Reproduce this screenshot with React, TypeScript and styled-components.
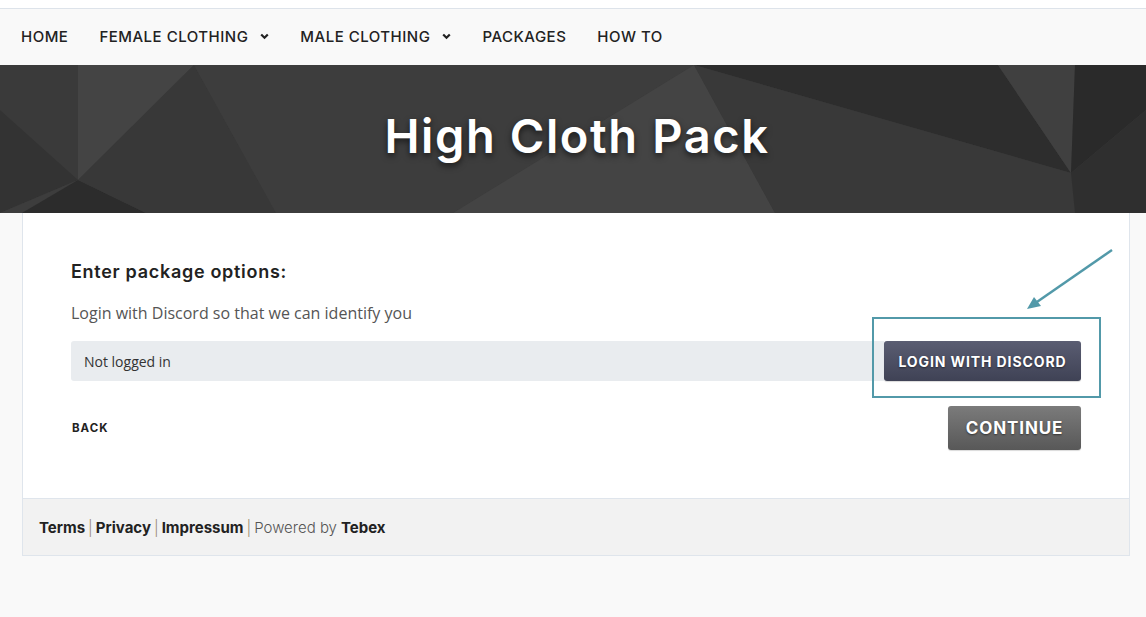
import React from 'react';
import styled, { createGlobalStyle } from 'styled-components';

const GlobalStyle = createGlobalStyle`
  body {
    margin: 0;
    background: #f9f9f9;
    font-family: "Open Sans", "Noto Sans", sans-serif;
  }
`;

const HEAD = `Inter, "Noto Sans", sans-serif`;

const TopStrip = styled.div`
  height: 8px;
  background: #fff;
  border-bottom: 1px solid #dde3ea;
`;

const Nav = styled.nav`
  height: 56px;
  display: flex;
  align-items: center;
  gap: 31px;
  padding-left: 21px;
  background: #f9f9f9;
`;

const NavItem = styled.a`
  display: flex;
  align-items: center;
  gap: 12px;
  font-family: ${HEAD};
  font-weight: 500;
  font-size: 15px;
  letter-spacing: 0.5px;
  color: #222;
  text-decoration: none;
  margin-top: -2px;
`;

const Hero = styled.header`
  position: relative;
  height: 148px;
  background: #3b3b3b;
  display: flex;
  align-items: center;
  justify-content: center;
  overflow: hidden;
`;

const HeroArt = styled.svg`
  position: absolute;
  inset: 0;
  width: 100%;
  height: 100%;
`;

const Title = styled.h1`
  position: relative;
  margin: 0 0 8px 8px;
  font-family: ${HEAD};
  font-weight: 600;
  font-size: 47px;
  letter-spacing: 1.6px;
  color: #fff;
  text-shadow: 0 3px 6px rgba(0, 0, 0, 0.6);
`;

const Main = styled.main`
  margin: 0 16px 0 22px;
`;

const Card = styled.section`
  background: #fff;
  border: 1px solid #dfe5ec;
  border-top: none;
`;

const CardBody = styled.div`
  padding: 48px;
`;

const Heading = styled.h3`
  margin: 0;
  font-family: ${HEAD};
  font-weight: 600;
  font-size: 18px;
  letter-spacing: 0.7px;
  color: #222;
  line-height: 22px;
`;

const Help = styled.p`
  margin: 18px 0 0;
  font-size: 16px;
  line-height: 24px;
  color: #555;
`;

const InputRow = styled.div`
  display: flex;
  margin-top: 16px;
  height: 40px;
`;

const Field = styled.div`
  flex: 1;
  display: flex;
  align-items: center;
  padding-left: 13px;
  background: #e9ecef;
  border-radius: 3px 0 0 3px;
  font-size: 14px;
  color: #333;
`;

const ButtonWrap = styled.div`
  position: relative;
  display: flex;
`;

const Button = styled.button<{ tone: 'discord' | 'grey' }>`
  border: none;
  border-radius: 3px;
  color: #fff;
  font-family: ${HEAD};
  font-weight: 700;
  text-transform: uppercase;
  text-shadow: 0 1px 2px rgba(0, 0, 0, 0.5);
  cursor: pointer;
  padding: 0;
  background: ${(p) =>
    p.tone === 'discord'
      ? 'linear-gradient(#5a5d72, #3f4255)'
      : 'linear-gradient(#7b7b7b, #585858)'};
  box-shadow: 0 1px 1px rgba(0, 0, 0, 0.15);
`;

const DiscordButton = styled(Button)`
  width: 197px;
  font-size: 14px;
  letter-spacing: 0.9px;
`;

const ContinueButton = styled(Button)`
  width: 133px;
  height: 44px;
  font-size: 17px;
  letter-spacing: 0.9px;
`;

const Highlight = styled.div`
  position: absolute;
  left: -12px;
  top: -24px;
  right: -20px;
  bottom: -17px;
  border: 2px solid #5299a9;
  pointer-events: none;
`;

const Arrow = styled.svg`
  position: absolute;
  left: 138px;
  top: -95px;
  width: 96px;
  height: 68px;
  overflow: visible;
`;

const Actions = styled.div`
  display: flex;
  justify-content: space-between;
  align-items: center;
  margin-top: 25px;
`;

const Back = styled.a`
  font-family: ${HEAD};
  font-weight: 700;
  font-size: 11.5px;
  letter-spacing: 1px;
  color: #222;
  margin-left: 1px;
`;

const Footer = styled.footer`
  height: 56px;
  display: flex;
  align-items: center;
  padding: 0 16px;
  background: #f2f2f2;
  border-top: 1px solid #dfe5ec;
  font-family: ${HEAD};
  font-size: 15px;
  color: #555;
`;

const FootLink = styled.a`
  font-weight: 700;
  color: #222;
`;

const Sep = styled.span`
  color: #9a8a70;
  margin: 0 3px;
  font-weight: 300;
`;

const Light = styled.span`
  font-weight: 300;
  margin-right: 4px;
`;

const Chevron = () => (
  <svg width="9" height="7" viewBox="0 0 9 7">
    <path d="M1.2 1.5 L4.5 4.8 L7.8 1.5" stroke="#222" strokeWidth="2.2" fill="none" />
  </svg>
);

const polys: [string, string][] = [
  ['0,0 78,0 78,115 0,45', '#3a3a3a'],
  ['0,45 78,115 0,148', '#333333'],
  ['78,0 194,0 78,115', '#444444'],
  ['0,148 78,115 22,148', '#3d3d3d'],
  ['78,115 22,148 146,148', '#2c2c2c'],
  ['194,0 276,148 146,148 78,115', '#383838'],
  ['194,0 694,0 453,148 276,148', '#3d3d3d'],
  ['694,0 775,148 453,148', '#444444'],
  ['694,0 998,0 1071,108', '#2d2d2d'],
  ['694,0 1071,108 1075,148 775,148', '#393939'],
  ['998,0 1075,0 1071,108', '#404040'],
  ['1075,0 1146,0 1146,45 1071,108', '#2a2a2a'],
  ['1071,108 1146,45 1146,148 1075,148', '#2f2f2f'],
];

export default function App() {
  return (
    <>
      <GlobalStyle />
      <TopStrip />
      <Nav>
        <NavItem>HOME</NavItem>
        <NavItem>
          FEMALE CLOTHING <Chevron />
        </NavItem>
        <NavItem>
          MALE CLOTHING <Chevron />
        </NavItem>
        <NavItem>PACKAGES</NavItem>
        <NavItem>HOW TO</NavItem>
      </Nav>
      <Hero>
        <HeroArt viewBox="0 0 1146 148" preserveAspectRatio="none">
          {polys.map(([pts, fill], i) => (
            <polygon key={i} points={pts} fill={fill} />
          ))}
        </HeroArt>
        <Title>High Cloth Pack</Title>
      </Hero>
      <Main>
        <Card>
          <CardBody>
            <Heading>Enter package options:</Heading>
            <Help>Login with Discord so that we can identify you</Help>
            <InputRow>
              <Field>Not logged in</Field>
              <ButtonWrap>
                <DiscordButton tone="discord">Login with Discord</DiscordButton>
                <Highlight />
                <Arrow viewBox="0 0 96 68">
                  <line x1="90" y1="4" x2="12" y2="58" stroke="#5299a9" strokeWidth="2.5" />
                  <polygon points="5,63 12,51 19,60" fill="#5299a9" />
                </Arrow>
              </ButtonWrap>
            </InputRow>
            <Actions>
              <Back>BACK</Back>
              <ContinueButton tone="grey">Continue</ContinueButton>
            </Actions>
          </CardBody>
          <Footer>
            <FootLink>Terms</FootLink>
            <Sep>|</Sep>
            <FootLink>Privacy</FootLink>
            <Sep>|</Sep>
            <FootLink>Impressum</FootLink>
            <Sep>|</Sep>
            <Light>Powered by</Light>
            <FootLink>Tebex</FootLink>
          </Footer>
        </Card>
      </Main>
    </>
  );
}
